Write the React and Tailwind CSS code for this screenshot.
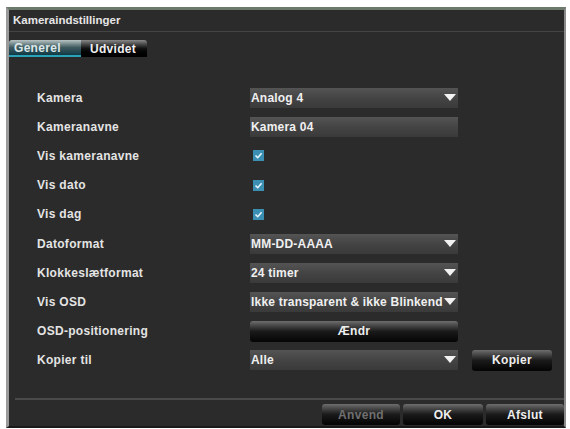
import React from "react";

const rows = [
  { label: "Kamera", type: "select", value: "Analog 4" },
  { label: "Kameranavne", type: "input", value: "Kamera 04" },
  { label: "Vis kameranavne", type: "check" },
  { label: "Vis dato", type: "check" },
  { label: "Vis dag", type: "check" },
  { label: "Datoformat", type: "select", value: "MM-DD-AAAA" },
  { label: "Klokkeslætformat", type: "select", value: "24 timer" },
  { label: "Vis OSD", type: "select", value: "Ikke transparent & ikke Blinkend" },
  { label: "OSD-positionering", type: "button", value: "Ændr" },
  { label: "Kopier til", type: "select", value: "Alle", extra: true },
];

const Arrow = () => (
  <svg width="12" height="8" viewBox="0 0 12 8" className="shrink-0">
    <path d="M0 0 L12 0 L6 7 Z" fill="#f2f2f2" />
  </svg>
);

const Check = () => (
  <div className="ml-[3px] w-[11px] h-[11px] bg-[#3a8fb3] flex items-center justify-center">
    <svg width="9" height="9" viewBox="0 0 9 9">
      <path d="M1.5 4.5 L3.7 6.7 L7.6 2.2" stroke="#e8f6ff" strokeWidth="1.6" fill="none" />
    </svg>
  </div>
);

const DarkButton = ({ children, className = "", dim }) => (
  <div
    className={`h-[21px] rounded-[3px] bg-gradient-to-b from-[#6e6e6e] via-[#1a1a1a] to-[#050505] flex items-center justify-center text-[12px] tracking-[0.3px] font-bold ${
      dim ? "text-[#6f6f6f]" : "text-[#eeeeee]"
    } ${className}`}
  >
    {children}
  </div>
);

const Control = ({ row }) => {
  if (row.type === "check") return <Check />;
  if (row.type === "button")
    return (
      <DarkButton className="w-[208px] h-[19px]">{row.value}</DarkButton>
    );
  return (
    <div className="w-[208px] h-[20px] bg-gradient-to-b from-[#545454] via-[#444444] to-[#3a3a3a] flex items-center justify-between pl-[1px] pr-[2px] text-[12px] tracking-[0.2px] font-bold text-[#f0f0f0] whitespace-nowrap overflow-hidden">
      <span>{row.value}</span>
      {row.type === "select" && <Arrow />}
    </div>
  );
};

export default function App() {
  return (
    <div
      className="w-[570px] h-[429px] bg-white pt-[7px] pl-[6px] pr-[4px] pb-[1px]"
      style={{ fontFamily: '"Liberation Sans", Arial, sans-serif' }}
    >
      <div className="h-full bg-[#2b2b2b] border-t-[3px] border-t-[#6b7a6b] border-l-[3px] border-l-[#9a9a9a] border-r-[2px] border-r-[#8a8a8a] border-b-[2px] border-b-[#1a1a1a] flex flex-col">
        <div className="h-[22px] flex items-center pl-[4px] text-[11.5px] font-bold text-[#e6e6e6] border-b border-[#444444]">
          Kameraindstillinger
        </div>
        <div className="flex mt-[8px] h-[17px]">
          <div className="w-[72px] bg-gradient-to-b from-[#b9c4c4] via-[#3f5a5f] to-[#0d3b47] border-b-[2px] border-[#2aa3b8] rounded-tl-[3px] text-[12px] tracking-[0.3px] font-bold text-[#dce8ea] flex items-center pl-[5px]">
            Generel
          </div>
          <div className="w-[66px] bg-gradient-to-b from-[#8a8a8a] via-[#111111] to-[#000000] rounded-tr-[3px] text-[12px] tracking-[0.3px] font-bold text-[#f0f0f0] flex items-center pl-[9px]">
            Udvidet
          </div>
        </div>
        <div className="flex flex-col pt-[26px] pl-[28px]">
          {rows.map((row) => (
            <div key={row.label} className="h-[29.2px] flex items-center">
              <div className="w-[213px] text-[12px] tracking-[0.3px] font-bold text-[#e4e4e4]">
                {row.label}
              </div>
              <Control row={row} />
              {row.extra && (
                <DarkButton className="w-[80px] ml-[14px] h-[19px]">Kopier</DarkButton>
              )}
            </div>
          ))}
        </div>
        <div className="mt-auto ml-[6px] border-t-[2px] border-[#4a4a4a]" />
        <div className="flex justify-end gap-[3px] pt-[4px] pb-[1px]">
          <DarkButton className="w-[78px]" dim>
            Anvend
          </DarkButton>
          <DarkButton className="w-[80px]">OK</DarkButton>
          <DarkButton className="w-[78px]">Afslut</DarkButton>
        </div>
      </div>
    </div>
  );
}
